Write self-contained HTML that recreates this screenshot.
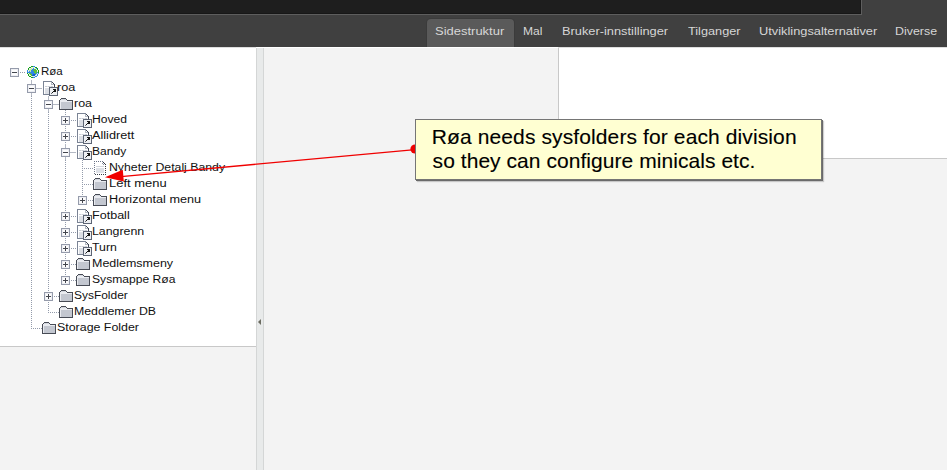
<!DOCTYPE html>
<html><head><meta charset="utf-8"><style>
*{margin:0;padding:0}
html,body{width:947px;height:470px;overflow:hidden;background:#f3f3f3;position:relative;font-family:"Liberation Sans", sans-serif}
.t{position:absolute;white-space:pre;line-height:1;font-family:"Liberation Sans", sans-serif;transform-origin:0 0}
#topdark{position:absolute;left:0;top:0;width:861px;height:14px;background:#1e1e1e;border-right:1px solid #5e5e5e;border-bottom:1px solid #5e5e5e;box-shadow:-1px -1px 0 #171717 inset}
#bar{position:absolute;left:0;top:0;width:947px;height:47px;background:#404040}
#topbg{}
#tab{position:absolute;left:427px;top:19px;width:87px;height:28px;background:#5a5a5a;border-radius:4px 4px 0 0;box-shadow:0 0 0 1px #3b3b3b}
#left{position:absolute;left:0;top:47px;width:256px;height:298px;background:#fff;border-top:1px solid #dedede;border-bottom:1px solid #c8c8c8}
#hl{position:absolute;left:256px;top:47px;width:302px;height:1px;background:#fff}
#split{position:absolute;left:256px;top:47px;width:6px;height:423px;background:#e8eaea;border-left:1px solid #d4d6d6;border-right:1px solid #d4d6d6}
#tri{position:absolute;left:1px;top:272px;width:0;height:0;border-top:3px solid transparent;border-bottom:3px solid transparent;border-right:3px solid #6b6b60}
#rightw{position:absolute;left:558px;top:48px;width:388px;height:110px;background:#fff;border-left:1px solid #c8c8c8;border-bottom:1px solid #c8c8c8}
#rtop{position:absolute;left:558px;top:47px;width:389px;height:1px;background:#dedede}
#note{position:absolute;left:415px;top:119px;width:405px;height:59px;background:#ffffd2;border:1px solid #757575;box-shadow:1px 1px 0 #6a6a6a,2px 2px 1px rgba(0,0,0,0.18)}
.bx{position:absolute;width:7px;height:7px;border:1px solid #959bab;background:#fdfdfe;box-shadow:inset 0 0 0 1px #eeeff3}
.sg{position:absolute;background:#43464e}
.ic{position:absolute;overflow:visible}
.vd{position:absolute;width:1px;background:repeating-linear-gradient(to bottom,#939bab 0,#939bab 1px,transparent 1px,transparent 2px)}
.hd{position:absolute;height:1px;background:repeating-linear-gradient(to right,#939bab 0,#939bab 1px,transparent 1px,transparent 2px)}
.ls{position:absolute;background:#b4b9c4}
</style></head>
<body>
<svg width="0" height="0" style="position:absolute"><defs><symbol id="folder" viewBox="0 0 14 12" shape-rendering="crispEdges"><rect x="2" y="0" width="5" height="1" fill="#474b55"/><rect x="1" y="1" width="1" height="1" fill="#474b55"/><rect x="2" y="1" width="5" height="1" fill="#d3d7de"/><rect x="7" y="1" width="1" height="1" fill="#474b55"/><rect x="0" y="2" width="1" height="1" fill="#474b55"/><rect x="1" y="2" width="7" height="1" fill="#e9ebf0"/><rect x="8" y="2" width="6" height="1" fill="#474b55"/><rect x="0" y="3" width="1" height="1" fill="#474b55"/><rect x="1" y="3" width="12" height="1" fill="#e9ebf0"/><rect x="13" y="3" width="1" height="1" fill="#474b55"/><rect x="0" y="4" width="1" height="1" fill="#474b55"/><rect x="1" y="4" width="1" height="1" fill="#e9ebf0"/><rect x="2" y="4" width="11" height="1" fill="#c3c7d0"/><rect x="13" y="4" width="1" height="1" fill="#474b55"/><rect x="0" y="5" width="1" height="1" fill="#474b55"/><rect x="1" y="5" width="1" height="1" fill="#e9ebf0"/><rect x="2" y="5" width="11" height="1" fill="#c3c7d0"/><rect x="13" y="5" width="1" height="1" fill="#474b55"/><rect x="0" y="6" width="1" height="1" fill="#474b55"/><rect x="1" y="6" width="1" height="1" fill="#e9ebf0"/><rect x="2" y="6" width="11" height="1" fill="#c3c7d0"/><rect x="13" y="6" width="1" height="1" fill="#474b55"/><rect x="0" y="7" width="1" height="1" fill="#474b55"/><rect x="1" y="7" width="1" height="1" fill="#e9ebf0"/><rect x="2" y="7" width="11" height="1" fill="#c3c7d0"/><rect x="13" y="7" width="1" height="1" fill="#474b55"/><rect x="0" y="8" width="1" height="1" fill="#474b55"/><rect x="1" y="8" width="1" height="1" fill="#e9ebf0"/><rect x="2" y="8" width="11" height="1" fill="#c3c7d0"/><rect x="13" y="8" width="1" height="1" fill="#474b55"/><rect x="0" y="9" width="1" height="1" fill="#474b55"/><rect x="1" y="9" width="1" height="1" fill="#e9ebf0"/><rect x="2" y="9" width="11" height="1" fill="#c3c7d0"/><rect x="13" y="9" width="1" height="1" fill="#474b55"/><rect x="0" y="10" width="1" height="1" fill="#474b55"/><rect x="1" y="10" width="1" height="1" fill="#e9ebf0"/><rect x="2" y="10" width="11" height="1" fill="#c3c7d0"/><rect x="13" y="10" width="1" height="1" fill="#474b55"/><rect x="0" y="11" width="14" height="1" fill="#474b55"/></symbol><symbol id="page" viewBox="0 0 15 15" shape-rendering="crispEdges"><rect x="0" y="0" width="9" height="1" fill="#7b8495"/><rect x="0" y="1" width="1" height="1" fill="#7b8495"/><rect x="1" y="1" width="7" height="1" fill="#ffffff"/><rect x="8" y="1" width="1" height="1" fill="#b4bac4"/><rect x="9" y="1" width="1" height="1" fill="#3f4552"/><rect x="0" y="2" width="1" height="1" fill="#7b8495"/><rect x="1" y="2" width="7" height="1" fill="#ffffff"/><rect x="8" y="2" width="1" height="1" fill="#b4bac4"/><rect x="9" y="2" width="1" height="1" fill="#ffffff"/><rect x="10" y="2" width="1" height="1" fill="#3f4552"/><rect x="0" y="3" width="1" height="1" fill="#7b8495"/><rect x="1" y="3" width="7" height="1" fill="#ffffff"/><rect x="8" y="3" width="3" height="1" fill="#b4bac4"/><rect x="11" y="3" width="1" height="1" fill="#3f4552"/><rect x="0" y="4" width="1" height="1" fill="#7b8495"/><rect x="1" y="4" width="10" height="1" fill="#ffffff"/><rect x="11" y="4" width="1" height="1" fill="#3f4552"/><rect x="0" y="5" width="1" height="1" fill="#7b8495"/><rect x="1" y="5" width="1" height="1" fill="#ffffff"/><rect x="2" y="5" width="2" height="1" fill="#c9cdd5"/><rect x="4" y="5" width="1" height="1" fill="#e2e4e8"/><rect x="5" y="5" width="2" height="1" fill="#c9cdd5"/><rect x="7" y="5" width="1" height="1" fill="#e2e4e8"/><rect x="8" y="5" width="2" height="1" fill="#c9cdd5"/><rect x="10" y="5" width="1" height="1" fill="#ffffff"/><rect x="11" y="5" width="1" height="1" fill="#3f4552"/><rect x="0" y="6" width="1" height="1" fill="#7b8495"/><rect x="1" y="6" width="5" height="1" fill="#ffffff"/><rect x="6" y="6" width="9" height="1" fill="#5d6575"/><rect x="0" y="7" width="1" height="1" fill="#7b8495"/><rect x="1" y="7" width="1" height="1" fill="#ffffff"/><rect x="2" y="7" width="4" height="1" fill="#dcdfe5"/><rect x="6" y="7" width="1" height="1" fill="#5d6575"/><rect x="7" y="7" width="7" height="1" fill="#eef0f3"/><rect x="14" y="7" width="1" height="1" fill="#5d6575"/><rect x="0" y="8" width="1" height="1" fill="#7b8495"/><rect x="1" y="8" width="1" height="1" fill="#ffffff"/><rect x="2" y="8" width="4" height="1" fill="#dcdfe5"/><rect x="6" y="8" width="1" height="1" fill="#5d6575"/><rect x="7" y="8" width="3" height="1" fill="#eef0f3"/><rect x="10" y="8" width="3" height="1" fill="#151515"/><rect x="13" y="8" width="1" height="1" fill="#eef0f3"/><rect x="14" y="8" width="1" height="1" fill="#5d6575"/><rect x="0" y="9" width="1" height="1" fill="#7b8495"/><rect x="1" y="9" width="1" height="1" fill="#ffffff"/><rect x="2" y="9" width="4" height="1" fill="#dcdfe5"/><rect x="6" y="9" width="1" height="1" fill="#5d6575"/><rect x="7" y="9" width="4" height="1" fill="#eef0f3"/><rect x="11" y="9" width="2" height="1" fill="#151515"/><rect x="13" y="9" width="1" height="1" fill="#eef0f3"/><rect x="14" y="9" width="1" height="1" fill="#5d6575"/><rect x="0" y="10" width="1" height="1" fill="#7b8495"/><rect x="1" y="10" width="1" height="1" fill="#ffffff"/><rect x="2" y="10" width="4" height="1" fill="#dcdfe5"/><rect x="6" y="10" width="1" height="1" fill="#5d6575"/><rect x="7" y="10" width="3" height="1" fill="#eef0f3"/><rect x="10" y="10" width="3" height="1" fill="#151515"/><rect x="13" y="10" width="1" height="1" fill="#eef0f3"/><rect x="14" y="10" width="1" height="1" fill="#5d6575"/><rect x="0" y="11" width="1" height="1" fill="#7b8495"/><rect x="1" y="11" width="1" height="1" fill="#ffffff"/><rect x="2" y="11" width="4" height="1" fill="#dcdfe5"/><rect x="6" y="11" width="1" height="1" fill="#5d6575"/><rect x="7" y="11" width="2" height="1" fill="#eef0f3"/><rect x="9" y="11" width="1" height="1" fill="#151515"/><rect x="10" y="11" width="4" height="1" fill="#eef0f3"/><rect x="14" y="11" width="1" height="1" fill="#5d6575"/><rect x="0" y="12" width="1" height="1" fill="#7b8495"/><rect x="1" y="12" width="1" height="1" fill="#ffffff"/><rect x="2" y="12" width="4" height="1" fill="#dcdfe5"/><rect x="6" y="12" width="1" height="1" fill="#5d6575"/><rect x="7" y="12" width="1" height="1" fill="#eef0f3"/><rect x="8" y="12" width="1" height="1" fill="#6a6e78"/><rect x="9" y="12" width="5" height="1" fill="#eef0f3"/><rect x="14" y="12" width="1" height="1" fill="#5d6575"/><rect x="0" y="13" width="6" height="1" fill="#7b8495"/><rect x="6" y="13" width="1" height="1" fill="#5d6575"/><rect x="7" y="13" width="7" height="1" fill="#eef0f3"/><rect x="14" y="13" width="1" height="1" fill="#5d6575"/><rect x="6" y="14" width="9" height="1" fill="#5d6575"/></symbol><symbol id="dpage" viewBox="0 0 12 14" shape-rendering="crispEdges"><rect x="0" y="0" width="1" height="1" fill="#6d7689"/><rect x="2" y="0" width="1" height="1" fill="#6d7689"/><rect x="4" y="0" width="1" height="1" fill="#6d7689"/><rect x="6" y="0" width="1" height="1" fill="#6d7689"/><rect x="8" y="0" width="1" height="1" fill="#6d7689"/><rect x="9" y="1" width="1" height="1" fill="#353a44"/><rect x="0" y="2" width="1" height="1" fill="#6d7689"/><rect x="8" y="2" width="1" height="1" fill="#8a93a6"/><rect x="9" y="2" width="1" height="1" fill="#ffffff"/><rect x="10" y="2" width="1" height="1" fill="#353a44"/><rect x="9" y="3" width="1" height="1" fill="#8a93a6"/><rect x="11" y="3" width="1" height="1" fill="#353a44"/><rect x="0" y="4" width="1" height="1" fill="#6d7689"/><rect x="2" y="5" width="8" height="1" fill="#d2d6dd"/><rect x="11" y="5" width="1" height="1" fill="#353a44"/><rect x="0" y="6" width="1" height="1" fill="#6d7689"/><rect x="2" y="7" width="8" height="1" fill="#dee1e7"/><rect x="11" y="7" width="1" height="1" fill="#353a44"/><rect x="0" y="8" width="1" height="1" fill="#6d7689"/><rect x="2" y="8" width="8" height="1" fill="#dee1e7"/><rect x="2" y="9" width="8" height="1" fill="#dee1e7"/><rect x="11" y="9" width="1" height="1" fill="#353a44"/><rect x="0" y="10" width="1" height="1" fill="#6d7689"/><rect x="2" y="10" width="8" height="1" fill="#dee1e7"/><rect x="2" y="11" width="8" height="1" fill="#dee1e7"/><rect x="11" y="11" width="1" height="1" fill="#353a44"/><rect x="0" y="12" width="1" height="1" fill="#6d7689"/><rect x="1" y="13" width="1" height="1" fill="#353a44"/><rect x="3" y="13" width="1" height="1" fill="#353a44"/><rect x="5" y="13" width="1" height="1" fill="#353a44"/><rect x="7" y="13" width="1" height="1" fill="#353a44"/><rect x="9" y="13" width="1" height="1" fill="#353a44"/><rect x="11" y="13" width="1" height="1" fill="#353a44"/></symbol><symbol id="globe" viewBox="0 0 12 12" shape-rendering="crispEdges"><rect x="4" y="0" width="2" height="1" fill="#17a01b"/><rect x="6" y="0" width="2" height="1" fill="#2f86e8"/><rect x="2" y="1" width="2" height="1" fill="#17a01b"/><rect x="4" y="1" width="4" height="1" fill="#e4f2e0"/><rect x="8" y="1" width="2" height="1" fill="#17a01b"/><rect x="1" y="2" width="1" height="1" fill="#17a01b"/><rect x="2" y="2" width="2" height="1" fill="#e4f2e0"/><rect x="4" y="2" width="1" height="1" fill="#c6e6a4"/><rect x="5" y="2" width="1" height="1" fill="#e4f2e0"/><rect x="6" y="2" width="1" height="1" fill="#2f86e8"/><rect x="7" y="2" width="2" height="1" fill="#e4f2e0"/><rect x="9" y="2" width="1" height="1" fill="#2f86e8"/><rect x="10" y="2" width="1" height="1" fill="#17a01b"/><rect x="1" y="3" width="1" height="1" fill="#17a01b"/><rect x="2" y="3" width="1" height="1" fill="#e4f2e0"/><rect x="3" y="3" width="2" height="1" fill="#c6e6a4"/><rect x="5" y="3" width="2" height="1" fill="#2f86e8"/><rect x="7" y="3" width="2" height="1" fill="#5dbd3e"/><rect x="9" y="3" width="1" height="1" fill="#e4f2e0"/><rect x="10" y="3" width="1" height="1" fill="#17a01b"/><rect x="0" y="4" width="1" height="1" fill="#2f86e8"/><rect x="1" y="4" width="1" height="1" fill="#e4f2e0"/><rect x="2" y="4" width="2" height="1" fill="#c6e6a4"/><rect x="4" y="4" width="2" height="1" fill="#2f86e8"/><rect x="6" y="4" width="4" height="1" fill="#5dbd3e"/><rect x="10" y="4" width="1" height="1" fill="#e4f2e0"/><rect x="11" y="4" width="1" height="1" fill="#17a01b"/><rect x="0" y="5" width="1" height="1" fill="#2f86e8"/><rect x="1" y="5" width="1" height="1" fill="#e4f2e0"/><rect x="2" y="5" width="1" height="1" fill="#2f86e8"/><rect x="3" y="5" width="1" height="1" fill="#c6e6a4"/><rect x="4" y="5" width="3" height="1" fill="#2f86e8"/><rect x="7" y="5" width="3" height="1" fill="#5dbd3e"/><rect x="10" y="5" width="1" height="1" fill="#e4f2e0"/><rect x="11" y="5" width="1" height="1" fill="#17a01b"/><rect x="0" y="6" width="7" height="1" fill="#2f86e8"/><rect x="7" y="6" width="3" height="1" fill="#5dbd3e"/><rect x="10" y="6" width="1" height="1" fill="#2f86e8"/><rect x="11" y="6" width="1" height="1" fill="#17a01b"/><rect x="0" y="7" width="1" height="1" fill="#17a01b"/><rect x="1" y="7" width="1" height="1" fill="#e4f2e0"/><rect x="2" y="7" width="2" height="1" fill="#5dbd3e"/><rect x="4" y="7" width="4" height="1" fill="#2f86e8"/><rect x="8" y="7" width="1" height="1" fill="#5dbd3e"/><rect x="9" y="7" width="1" height="1" fill="#2f86e8"/><rect x="10" y="7" width="1" height="1" fill="#e4f2e0"/><rect x="11" y="7" width="1" height="1" fill="#2f86e8"/><rect x="1" y="8" width="1" height="1" fill="#17a01b"/><rect x="2" y="8" width="1" height="1" fill="#e4f2e0"/><rect x="3" y="8" width="2" height="1" fill="#5dbd3e"/><rect x="5" y="8" width="1" height="1" fill="#2f86e8"/><rect x="6" y="8" width="2" height="1" fill="#0f5fd0"/><rect x="8" y="8" width="1" height="1" fill="#2f86e8"/><rect x="9" y="8" width="1" height="1" fill="#e4f2e0"/><rect x="10" y="8" width="1" height="1" fill="#2f86e8"/><rect x="1" y="9" width="1" height="1" fill="#17a01b"/><rect x="2" y="9" width="2" height="1" fill="#e4f2e0"/><rect x="4" y="9" width="1" height="1" fill="#5dbd3e"/><rect x="5" y="9" width="3" height="1" fill="#0f5fd0"/><rect x="8" y="9" width="2" height="1" fill="#e4f2e0"/><rect x="10" y="9" width="1" height="1" fill="#2f86e8"/><rect x="2" y="10" width="2" height="1" fill="#17a01b"/><rect x="4" y="10" width="4" height="1" fill="#e4f2e0"/><rect x="8" y="10" width="2" height="1" fill="#2f86e8"/><rect x="4" y="11" width="2" height="1" fill="#17a01b"/><rect x="6" y="11" width="2" height="1" fill="#2f86e8"/></symbol></defs></svg>
<div id="bar"></div><div id="topdark"></div><div id="tab"></div><div class="t k-tab0" style="left:435.35px;top:27px;font-size:10px;transform:scaleX(1.2979);color:#d6d6d6;">Sidestruktur</div><div class="t k-tab1" style="left:523.28px;top:27px;font-size:10px;transform:scaleX(1.2058);color:#d6d6d6;">Mal</div><div class="t k-tab2" style="left:561.94px;top:27px;font-size:10px;transform:scaleX(1.2816);color:#d6d6d6;">Bruker-innstillinger</div><div class="t k-tab3" style="left:688.17px;top:27px;font-size:10px;transform:scaleX(1.2703);color:#d6d6d6;">Tilganger</div><div class="t k-tab4" style="left:759.31px;top:27px;font-size:10px;transform:scaleX(1.2809);color:#d6d6d6;">Utviklingsalternativer</div><div class="t k-tab5" style="left:895.41px;top:27px;font-size:10px;transform:scaleX(1.2412);color:#d6d6d6;">Diverse</div><div id="left"></div><div id="split"><div id="tri"></div></div><div id="rightw"></div><div id="hl"></div><div id="rtop"></div><div class="vd" style="left:31px;top:94px;height:235px"></div><div class="vd" style="left:48px;top:110px;height:203px"></div><div class="vd" style="left:65px;top:110px;height:171px"></div><div class="vd" style="left:82px;top:160px;height:41px"></div><div class="hd" style="left:20px;top:72px;width:6px"></div><div class="bx" style="left:10px;top:68px"></div><div class="sg" style="left:12px;top:72px;width:5px;height:1px"></div><svg class="ic" style="left:27px;top:66px" width="12" height="12"><use href="#globe"/></svg><div class="t k-row0" style="left:40.69px;top:67px;font-size:10px;transform:scaleX(1.1489);color:#111;">Røa</div><div class="ls" style="left:31px;top:80px;width:1px;height:4px"></div><div class="ls" style="left:36px;top:88px;width:6px;height:1px"></div><div class="ls" style="left:31px;top:93px;width:1px;height:3px"></div><div class="bx" style="left:27px;top:84px"></div><div class="sg" style="left:29px;top:88px;width:5px;height:1px"></div><svg class="ic" style="left:43px;top:81px" width="15" height="15"><use href="#page"/></svg><div class="t k-row1" style="left:57.18px;top:83px;font-size:10px;transform:scaleX(1.2686);color:#111;">roa</div><div class="ls" style="left:48px;top:96px;width:1px;height:4px"></div><div class="ls" style="left:53px;top:104px;width:6px;height:1px"></div><div class="ls" style="left:48px;top:109px;width:1px;height:3px"></div><div class="bx" style="left:44px;top:100px"></div><div class="sg" style="left:46px;top:104px;width:5px;height:1px"></div><svg class="ic" style="left:59px;top:98px" width="14" height="12"><use href="#folder"/></svg><div class="t k-row2" style="left:74.33px;top:99px;font-size:10px;transform:scaleX(1.2493);color:#111;">roa</div><div class="hd" style="left:71px;top:120px;width:6px"></div><div class="vd" style="left:65px;top:112px;height:4px"></div><div class="vd" style="left:65px;top:126px;height:3px"></div><div class="bx" style="left:61px;top:116px"></div><div class="sg" style="left:63px;top:120px;width:5px;height:1px"></div><div class="sg" style="left:65px;top:118px;width:1px;height:5px"></div><svg class="ic" style="left:77px;top:113px" width="15" height="15"><use href="#page"/></svg><div class="t k-row3" style="left:92.03px;top:115px;font-size:10px;transform:scaleX(1.2102);color:#111;">Hoved</div><div class="hd" style="left:71px;top:136px;width:6px"></div><div class="vd" style="left:65px;top:128px;height:4px"></div><div class="vd" style="left:65px;top:142px;height:3px"></div><div class="bx" style="left:61px;top:132px"></div><div class="sg" style="left:63px;top:136px;width:5px;height:1px"></div><div class="sg" style="left:65px;top:134px;width:1px;height:5px"></div><svg class="ic" style="left:77px;top:129px" width="15" height="15"><use href="#page"/></svg><div class="t k-row4" style="left:92.47px;top:131px;font-size:10px;transform:scaleX(1.2659);color:#111;">Allidrett</div><div class="ls" style="left:65px;top:144px;width:1px;height:4px"></div><div class="ls" style="left:70px;top:152px;width:6px;height:1px"></div><div class="ls" style="left:65px;top:157px;width:1px;height:3px"></div><div class="bx" style="left:61px;top:148px"></div><div class="sg" style="left:63px;top:152px;width:5px;height:1px"></div><svg class="ic" style="left:77px;top:145px" width="15" height="15"><use href="#page"/></svg><div class="t k-row5" style="left:91.94px;top:147px;font-size:10px;transform:scaleX(1.2053);color:#111;">Bandy</div><div class="hd" style="left:84px;top:168px;width:10px"></div><svg class="ic" style="left:94px;top:161px" width="12" height="14"><use href="#dpage"/></svg><div class="t k-row6" style="left:108.84px;top:163px;font-size:10px;transform:scaleX(1.2285);color:#111;">Nyheter Detalj Bandy</div><div class="hd" style="left:84px;top:184px;width:10px"></div><svg class="ic" style="left:93px;top:178px" width="14" height="12"><use href="#folder"/></svg><div class="t k-row7" style="left:108.99px;top:179px;font-size:10px;transform:scaleX(1.2952);color:#111;">Left menu</div><div class="hd" style="left:88px;top:200px;width:6px"></div><div class="vd" style="left:82px;top:192px;height:4px"></div><div class="bx" style="left:78px;top:196px"></div><div class="sg" style="left:80px;top:200px;width:5px;height:1px"></div><div class="sg" style="left:82px;top:198px;width:1px;height:5px"></div><svg class="ic" style="left:93px;top:194px" width="14" height="12"><use href="#folder"/></svg><div class="t k-row8" style="left:108.93px;top:195px;font-size:10px;transform:scaleX(1.2643);color:#111;">Horizontal menu</div><div class="hd" style="left:71px;top:216px;width:6px"></div><div class="vd" style="left:65px;top:208px;height:4px"></div><div class="vd" style="left:65px;top:222px;height:3px"></div><div class="bx" style="left:61px;top:212px"></div><div class="sg" style="left:63px;top:216px;width:5px;height:1px"></div><div class="sg" style="left:65px;top:214px;width:1px;height:5px"></div><svg class="ic" style="left:77px;top:209px" width="15" height="15"><use href="#page"/></svg><div class="t k-row9" style="left:91.53px;top:211px;font-size:10px;transform:scaleX(1.2562);color:#111;">Fotball</div><div class="hd" style="left:71px;top:232px;width:6px"></div><div class="vd" style="left:65px;top:224px;height:4px"></div><div class="vd" style="left:65px;top:238px;height:3px"></div><div class="bx" style="left:61px;top:228px"></div><div class="sg" style="left:63px;top:232px;width:5px;height:1px"></div><div class="sg" style="left:65px;top:230px;width:1px;height:5px"></div><svg class="ic" style="left:77px;top:225px" width="15" height="15"><use href="#page"/></svg><div class="t k-row10" style="left:91.52px;top:227px;font-size:10px;transform:scaleX(1.2361);color:#111;">Langrenn</div><div class="hd" style="left:71px;top:248px;width:6px"></div><div class="vd" style="left:65px;top:240px;height:4px"></div><div class="vd" style="left:65px;top:254px;height:3px"></div><div class="bx" style="left:61px;top:244px"></div><div class="sg" style="left:63px;top:248px;width:5px;height:1px"></div><div class="sg" style="left:65px;top:246px;width:1px;height:5px"></div><svg class="ic" style="left:77px;top:241px" width="15" height="15"><use href="#page"/></svg><div class="t k-row11" style="left:91.78px;top:243px;font-size:10px;transform:scaleX(1.2323);color:#111;">Turn</div><div class="hd" style="left:71px;top:264px;width:6px"></div><div class="vd" style="left:65px;top:256px;height:4px"></div><div class="vd" style="left:65px;top:270px;height:3px"></div><div class="bx" style="left:61px;top:260px"></div><div class="sg" style="left:63px;top:264px;width:5px;height:1px"></div><div class="sg" style="left:65px;top:262px;width:1px;height:5px"></div><svg class="ic" style="left:76px;top:258px" width="14" height="12"><use href="#folder"/></svg><div class="t k-row12" style="left:92.09px;top:259px;font-size:10px;transform:scaleX(1.2470);color:#111;">Medlemsmeny</div><div class="hd" style="left:71px;top:280px;width:6px"></div><div class="vd" style="left:65px;top:272px;height:4px"></div><div class="bx" style="left:61px;top:276px"></div><div class="sg" style="left:63px;top:280px;width:5px;height:1px"></div><div class="sg" style="left:65px;top:278px;width:1px;height:5px"></div><svg class="ic" style="left:76px;top:274px" width="14" height="12"><use href="#folder"/></svg><div class="t k-row13" style="left:92.24px;top:275px;font-size:10px;transform:scaleX(1.2104);color:#111;">Sysmappe Røa</div><div class="hd" style="left:54px;top:296px;width:6px"></div><div class="vd" style="left:48px;top:288px;height:4px"></div><div class="vd" style="left:48px;top:302px;height:3px"></div><div class="bx" style="left:44px;top:292px"></div><div class="sg" style="left:46px;top:296px;width:5px;height:1px"></div><div class="sg" style="left:48px;top:294px;width:1px;height:5px"></div><svg class="ic" style="left:59px;top:290px" width="14" height="12"><use href="#folder"/></svg><div class="t k-row14" style="left:74.49px;top:291px;font-size:10px;transform:scaleX(1.1952);color:#111;">SysFolder</div><div class="hd" style="left:50px;top:312px;width:10px"></div><svg class="ic" style="left:59px;top:306px" width="14" height="12"><use href="#folder"/></svg><div class="t k-row15" style="left:74.27px;top:307px;font-size:10px;transform:scaleX(1.2307);color:#111;">Meddlemer DB</div><div class="hd" style="left:33px;top:328px;width:10px"></div><svg class="ic" style="left:42px;top:322px" width="14" height="12"><use href="#folder"/></svg><div class="t k-row16" style="left:56.69px;top:323px;font-size:10px;transform:scaleX(1.2396);color:#111;">Storage Folder</div><svg id="arrow" width="947" height="470" style="position:absolute;left:0;top:0"><line x1="415" y1="149.7" x2="121" y2="176.6" stroke="#f00000" stroke-width="1.3"/><polygon points="105,177.3 122.8,169.8 123.8,181.6" fill="#f00000"/><circle cx="415" cy="149" r="4.6" fill="#ee0000"/></svg><div id="note"></div><div class="t k-n1" style="left:431.80px;top:126px;font-size:21px;letter-spacing:0.111px;color:#000;-webkit-text-stroke:0.12px #000">Røa needs sysfolders for each division</div><div class="t k-n2" style="left:432.60px;top:150px;font-size:21px;letter-spacing:0.053px;color:#000;-webkit-text-stroke:0.12px #000">so they can configure minicals etc.</div>
</body></html>
